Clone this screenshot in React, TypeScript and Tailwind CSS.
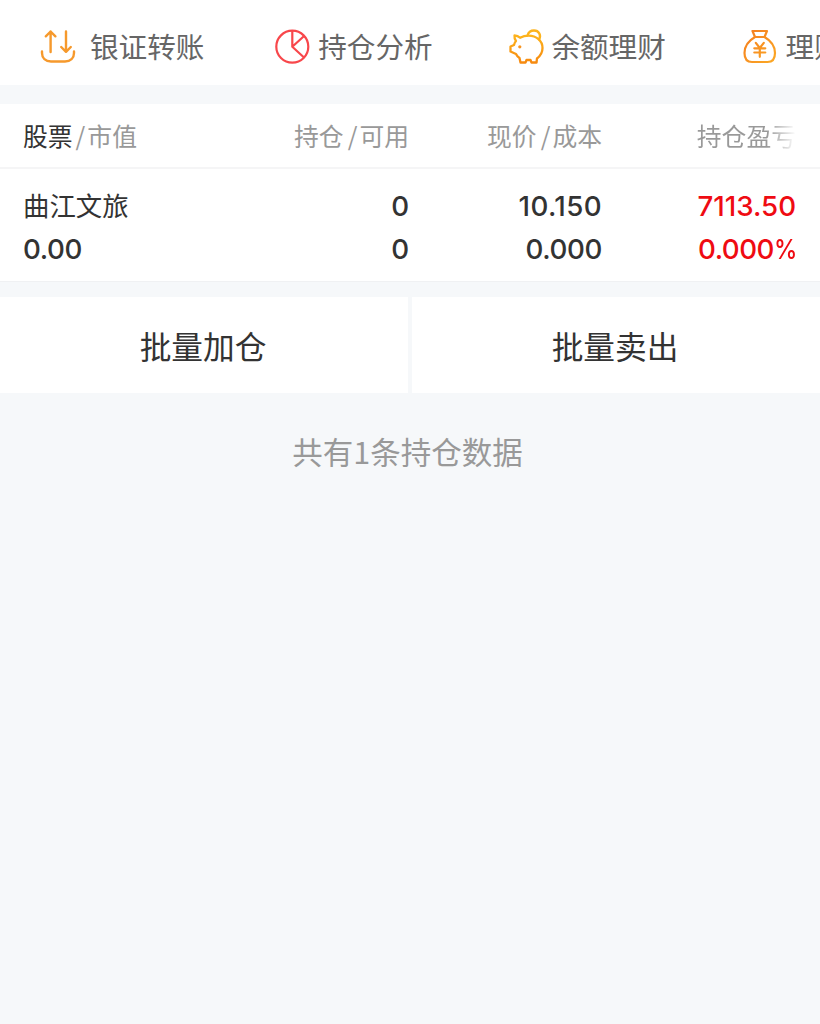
import type { ReactNode } from 'react';

const TransferIcon = () => (
    <svg className="w-9 h-9 shrink-0" viewBox="0 0 36 36" fill="none" stroke="#f6992c" strokeWidth="2.4" strokeLinecap="round" strokeLinejoin="round">
        <path d="M10.6 23V2.500M5.800 7.300l4.800-4.800 4.800 4.800" />
        <path d="M26 2.500v20M21.200 18l4.800 4.800 4.800-4.800" />
        <path d="M2 22.500v1.500c0 5.200 3.500 8.500 9 8.500h14c5.500 0 9-3.300 9-8.500v-1.500" />
    </svg>
);

const PieIcon = () => (
    <svg className="w-9 h-9 shrink-0" viewBox="0 0 36 36" fill="none" stroke="#f8474b" strokeWidth="2.2" strokeLinejoin="round">
        <circle cx="17.3" cy="17.7" r="16" />
        <path d="M17.300 1.700v16l12 11M17.300 17.700l11.500-10.500" />
    </svg>
);

const PiggyIcon = () => (
    <svg className="w-9 h-9 shrink-0" viewBox="0 0 36 36" fill="none" strokeWidth="2.3" strokeLinecap="round" strokeLinejoin="round">
        <path stroke="#fdb31c" d="M18.500 6.500C19.500 3 22.300 1.500 25 1.500c4.800 0 7.500 4.700 5.200 9" />
        <path
            stroke="url(#pig)"
            d="M5.500 6.500c2.500 0 4.300 1 5.600 2.300C13.500 7.500 16.500 6.700 19.500 6.700c8 0 14 5.300 14 12.300 0 4.300-2.300 8-5.500 10.500l-.5 4h-5l-1-2.500h-4l-1 2.500h-5l-1-4.500c-1.500-1-2.700-2.300-3.500-4L1.500 22.500v-5l3.500-1.500c.3-1.500 1-3 2-4C5.800 10.500 5.300 8.500 5.500 6.500z"
        />
        <circle cx="10.800" cy="17.800" r="1.600" fill="#f79420" />
        <defs>
            <linearGradient id="pig" x1="0" y1="0" x2="0" y2="1">
                <stop stopColor="#fdb31c" />
                <stop offset="1" stopColor="#f68a10" />
            </linearGradient>
        </defs>
    </svg>
);

const MoneyBagIcon = () => (
    <svg className="w-9 h-9 shrink-0" viewBox="0 0 36 36" fill="none" stroke="url(#bag)" strokeWidth="2.2" strokeLinecap="round" strokeLinejoin="round">
        <path d="M9.500 2h14.500l-2.500 6H12L9.500 2z" />
        <path d="M12 8C6 11.500 1.500 17 1.500 24c0 6 3 9 7.500 9h15.500c4.500 0 7.500-3 7.500-9 0-7-4.500-12.500-10.500-16" />
        <path d="M12.800 13.800l4 5.200 4-5.200M11.300 19.300h11M11.300 23.500h11M16.800 19.300v8.500" />
        <defs>
            <linearGradient id="bag" x1="0" y1="0" x2="34" y2="36" gradientUnits="userSpaceOnUse">
                <stop stopColor="#f47a1f" />
                <stop offset="1" stopColor="#fcac25" />
            </linearGradient>
        </defs>
    </svg>
);

const shortcuts: { label: string; icon: ReactNode; spacing: string }[] = [
    { label: '银证转账', icon: <TransferIcon />, spacing: 'gap-3.5' },
    { label: '持仓分析', icon: <PieIcon />, spacing: 'pl-px gap-[7px]' },
    { label: '余额理财', icon: <PiggyIcon />, spacing: 'pl-px gap-1.5' },
    { label: '理财', icon: <MoneyBagIcon />, spacing: 'gap-[7px]' },
];

export default function App() {
    return (
        <div className="w-full h-screen overflow-hidden bg-[#f6f8fa] text-[#333] font-['Noto_Sans_CJK_SC',sans-serif]">
            {/* Shortcuts */}
            <nav className="h-[85px] pl-10 pt-2 flex items-center bg-white overflow-hidden">
                {shortcuts.map((item) => (
                    <div key={item.label} className={`w-[234.2px] shrink-0 flex items-center whitespace-nowrap ${item.spacing}`}>
                        {item.icon}
                        <span className="text-[28.6px] leading-[34px] pb-0.5 text-[#666]">{item.label}</span>
                    </div>
                ))}
            </nav>

            {/* Holdings */}
            <section className="mt-[19px] h-[178px] bg-white border-b border-[#f0f1f3]">
                <div className="h-[65px] pl-[23px] pr-6 pb-0.5 grid grid-cols-[194px_192px_193px_194px] items-center text-right text-[24.8px] leading-9 text-[#999] border-b-2 border-[#f5f5f6] whitespace-nowrap">
                    <div className="text-left">
                        <span className="text-[#333]">股票</span>
                        <span className="ml-[3px] mr-0.5">/</span>市值
                    </div>
                    <div>持仓<span className="ml-1 mr-0.5">/</span>可用</div>
                    <div>现价<span className="ml-1 mr-0.5">/</span>成本</div>
                    <div className="bg-linear-to-r from-[#999] from-85% to-white bg-clip-text text-transparent">持仓盈亏</div>
                </div>
                <div className="pl-[23px] pr-6 pt-4 grid grid-cols-[194px_192px_193px_194px] text-right text-[27.7px] leading-[43px] font-medium font-['Inter',sans-serif] whitespace-nowrap">
                    <div className="h-[43px] text-left text-[26.4px] leading-10 font-normal font-['Noto_Sans_CJK_SC',sans-serif]">曲江文旅</div>
                    <div>0</div>
                    <div className="tracking-[0.4px]">10.150</div>
                    <div className="text-[#ef0b12]">7113.50</div>
                    <div className="text-left tracking-[-0.4px]">0.00</div>
                    <div>0</div>
                    <div className="tracking-[-0.4px]">0.000</div>
                    <div className="text-[#ef0b12] tracking-[-0.5px]">0.000<span className="inline-block w-[22px] origin-left scale-x-85 text-left">%</span></div>
                </div>
            </section>

            {/* Batch actions */}
            <div className="mt-[15px] h-24 grid grid-cols-2 gap-1 text-[31.7px]">
                <button className="bg-white pr-0.5 pt-0.5">批量加仓</button>
                <button className="bg-white pr-0.5 pt-0.5">批量卖出</button>
            </div>

            <p className="mt-[36px] pr-[5px] text-center text-[30.5px] leading-[44px] text-[#999]">共有1条持仓数据</p>
        </div>
    );
}
